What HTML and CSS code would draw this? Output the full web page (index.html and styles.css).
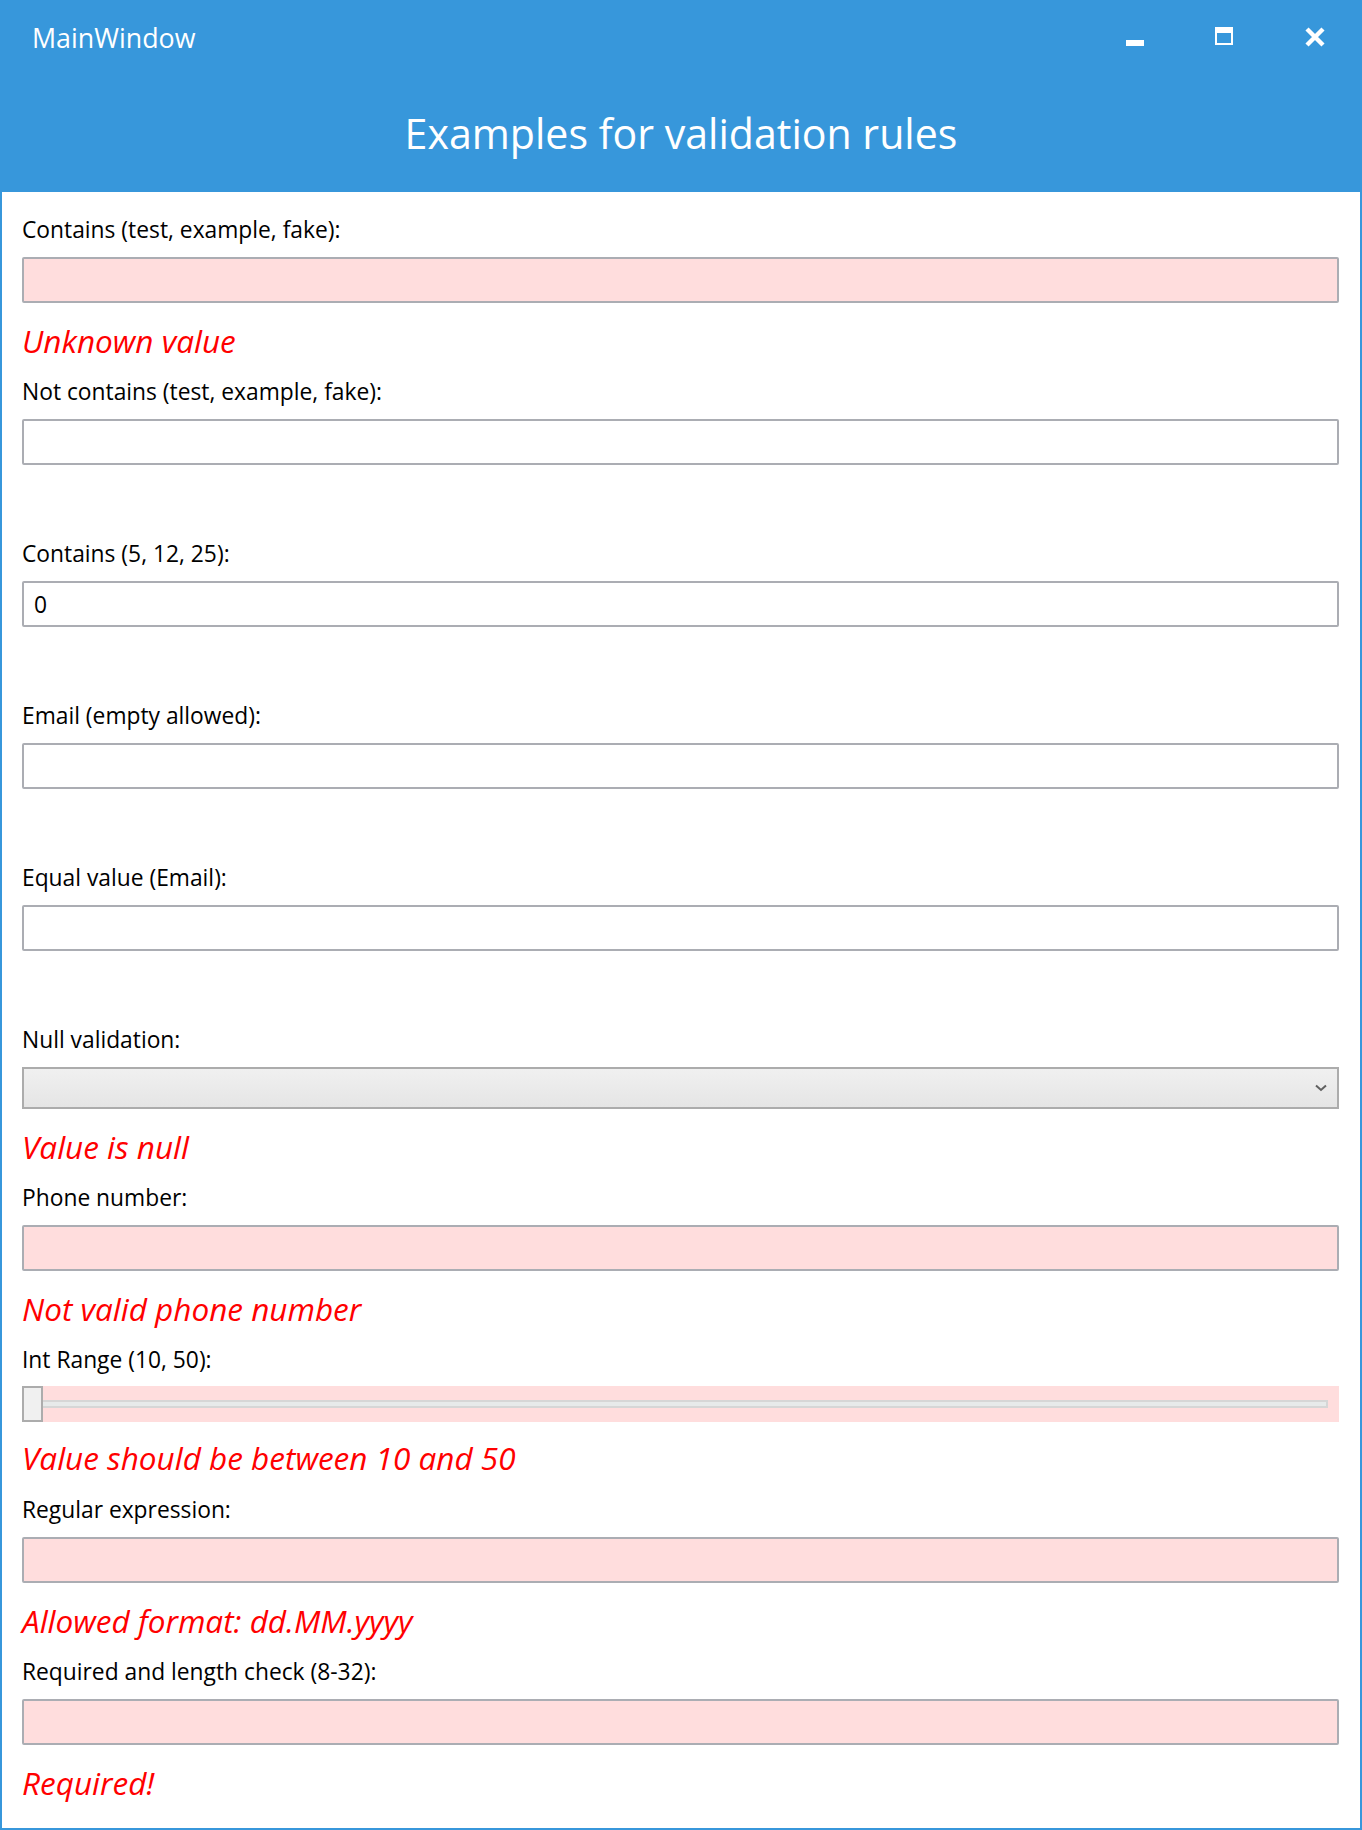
FILE: index.html
```html
<!DOCTYPE html>
<html lang="en">
<head>
<meta charset="utf-8">
<title>MainWindow</title>
<link rel="stylesheet" href="styles.css">
</head>
<body>
<div class="window">
  <header class="header">
    <div class="titlebar">
      <span class="title">MainWindow</span>
      <div class="controls">
        <span class="ctl"><svg width="20" height="20" viewBox="0 0 20 20"><rect x="1" y="13" width="18" height="6" fill="#fff"/></svg></span>
        <span class="ctl"><svg width="20" height="20" viewBox="0 0 20 20"><path d="M0 0h18v18H0z M2 6v10h14V6z" fill="#fff" fill-rule="evenodd"/></svg></span>
        <span class="ctl"><svg width="20" height="20" viewBox="0 0 20 20"><path d="M2 2L18 18M18 2L2 18" stroke="#fff" stroke-width="4.4" fill="none"/></svg></span>
      </div>
    </div>
    <h1 class="heading">Examples for validation rules</h1>
  </header>
  <main class="content">
    <div class="field">
      <div class="label">Contains (test, example, fake):</div>
      <div class="box invalid"></div>
      <div class="msg">Unknown value</div>
    </div>
    <div class="field">
      <div class="label">Not contains (test, example, fake):</div>
      <div class="box"></div>
      <div class="msg"></div>
    </div>
    <div class="field">
      <div class="label">Contains (5, 12, 25):</div>
      <div class="box"><span class="value">0</span></div>
      <div class="msg"></div>
    </div>
    <div class="field">
      <div class="label">Email (empty allowed):</div>
      <div class="box"></div>
      <div class="msg"></div>
    </div>
    <div class="field">
      <div class="label">Equal value (Email):</div>
      <div class="box"></div>
      <div class="msg"></div>
    </div>
    <div class="field">
      <div class="label">Null validation:</div>
      <div class="combo"><svg class="chev" width="12" height="8" viewBox="0 0 12 8"><path d="M1 1.5L6 6L11 1.5" stroke="#606060" stroke-width="2" fill="none"/></svg></div>
      <div class="msg">Value is null</div>
    </div>
    <div class="field">
      <div class="label">Phone number:</div>
      <div class="box invalid"></div>
      <div class="msg">Not valid phone number</div>
    </div>
    <div class="field field-slider">
      <div class="label">Int Range (10, 50):</div>
      <div class="slider">
        <div class="thumb"></div>
        <div class="track"></div>
      </div>
      <div class="msg">Value should be between 10 and 50</div>
    </div>
    <div class="field">
      <div class="label">Regular expression:</div>
      <div class="box invalid"></div>
      <div class="msg">Allowed format: dd.MM.yyyy</div>
    </div>
    <div class="field">
      <div class="label">Required and length check (8-32):</div>
      <div class="box invalid"></div>
      <div class="msg">Required!</div>
    </div>
  </main>
</div>
</body>
</html>
```

FILE: styles.css
```css
* { box-sizing: border-box; }
html, body { margin: 0; padding: 0; }
body { font-family: "Open Sans", "Noto Sans", sans-serif; background: #fff; }

.window {
  width: 1362px;
  height: 1830px;
  border: 2px solid #3797db;
  border-top: 0;
  display: flex;
  flex-direction: column;
  background: #fff;
}

.header {
  background: #3797db;
  color: #fff;
  height: 192px;
  margin: 0 -2px;
  display: flex;
  flex-direction: column;
}

.titlebar {
  height: 76px;
  display: flex;
  justify-content: space-between;
  align-items: flex-start;
}

.title {
  font-size: 26.8px;
  line-height: 30px;
  padding: 23px 0 0 32px;
}

.controls {
  display: flex;
  padding-top: 27px;
  padding-right: 2px;
}

.ctl {
  width: 90px;
  height: 20px;
  display: flex;
  justify-content: center;
}
.ctl svg { display: block; }

.heading {
  margin: 0;
  height: 116px;
  display: flex;
  align-items: center;
  justify-content: center;
  font-weight: 400;
  font-size: 41.1px;
  padding-bottom: 2px;
}

.content {
  padding: 23px 21px 0 20px;
  display: flex;
  flex-direction: column;
}

.field {
  display: flex;
  flex-direction: column;
  padding-bottom: 16px;
}

.label {
  font-size: 22.8px;
  line-height: 30px;
  color: #000;
  margin-bottom: 12px;
}

.box {
  height: 46px;
  border: 2px solid #abadb3;
  border-radius: 2px;
  background: #fff;
  display: flex;
  align-items: center;
  padding-left: 10px;
}
.box.invalid { background: #ffdddd; }

.value { font-size: 22.8px; color: #000; }

.msg {
  margin-top: 18px;
  height: 40px;
  line-height: 40px;
  font-size: 31.5px;
  font-style: italic;
  color: #ff0000;
}

.combo {
  height: 42px;
  border: 2px solid #acacac;
  background: linear-gradient(#f0f0f0, #e5e5e5);
  display: flex;
  align-items: center;
  justify-content: flex-end;
  padding-right: 10px;
}
.chev { display: block; }

.field-slider { padding-bottom: 17px; }
.field-slider .label { margin-bottom: 11px; }
.field-slider .msg { margin-top: 16px; }

.slider {
  height: 36px;
  background: #ffdddd;
  display: flex;
  align-items: center;
  padding-right: 11px;
}
.thumb {
  width: 21px;
  height: 36px;
  background: #f0f0f0;
  border: 2px solid #acacac;
  flex: none;
}
.track {
  flex: 1;
  height: 8px;
  background: #e7eaea;
  border: 2px solid #d6d6d6;
  border-left: 0;
}
```
